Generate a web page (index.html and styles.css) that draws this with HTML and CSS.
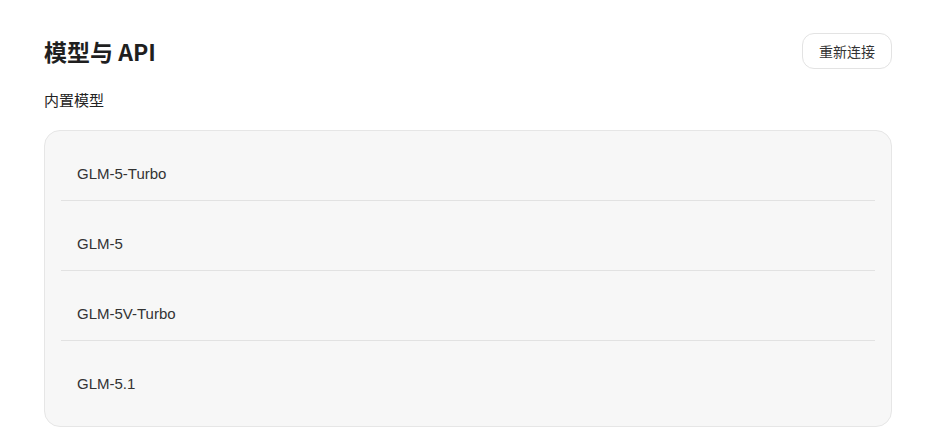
FILE: index.html
```html
<!DOCTYPE html>
<html lang="zh-CN">
<head>
<meta charset="utf-8">
<title>模型与 API</title>
<link rel="stylesheet" href="styles.css">
</head>
<body>
<main class="page">
  <header class="header">
    <h1 class="title">模型与 API</h1>
    <button class="btn" type="button">重新连接</button>
  </header>
  <div class="section-label">内置模型</div>
  <ul class="model-list">
    <li class="model-row">GLM-5-Turbo</li>
    <li class="model-row">GLM-5</li>
    <li class="model-row">GLM-5V-Turbo</li>
    <li class="model-row">GLM-5.1</li>
  </ul>
</main>
</body>
</html>
```
FILE: styles.css
```css
* { box-sizing: border-box; }
html, body { margin: 0; padding: 0; background: #ffffff; }
body {
  font-family: "Liberation Sans", Arial, "Noto Sans CJK SC", sans-serif;
  color: #222;
}
.page {
  padding: 33px 50px 0 44px;
}
.header {
  display: flex;
  align-items: center;
  justify-content: space-between;
  height: 35px;
}
.title {
  margin: 0;
  font-family: "Noto Sans CJK SC", sans-serif;
  font-size: 23px;
  line-height: 32px;
  font-weight: 700;
  color: #1f1f1f;
}
.btn {
  width: 90px;
  height: 36px;
  border: 1px solid #e3e3e3;
  border-radius: 12px;
  background: #ffffff;
  font-family: "Noto Sans CJK SC", sans-serif;
  font-size: 14px;
  color: #333;
  padding: 0;
  cursor: pointer;
}
.section-label {
  margin-top: 22px;
  font-family: "Noto Sans CJK SC", sans-serif;
  font-size: 15px;
  line-height: 20px;
  color: #222;
}
.model-list {
  list-style: none;
  margin: 20px 0 0 0;
  padding: 0 16px 16px;
  background: #f7f7f7;
  border: 1px solid #e6e6e6;
  border-radius: 16px;
}
.model-row {
  height: 70px;
  padding: 33px 16px 0;
  font-size: 15px;
  line-height: 20px;
  color: #333;
  border-bottom: 1px solid #e2e2e2;
}
.model-row:last-child {
  height: 69px;
  border-bottom: none;
}
```
